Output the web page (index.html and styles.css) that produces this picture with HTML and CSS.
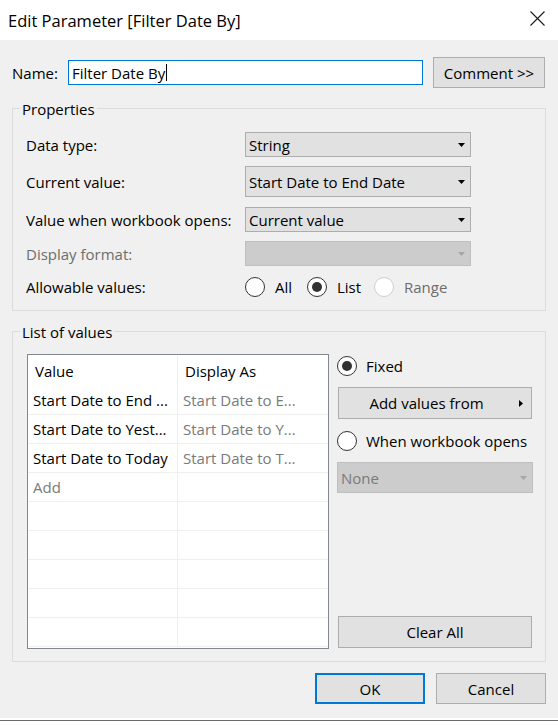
FILE: index.html
```html
<!DOCTYPE html>
<html>
<head>
<meta charset="utf-8">
<link rel="stylesheet" href="styles.css">
</head>
<body>
<div class="window">
  <header class="titlebar">
    <span class="title">Edit Parameter [Filter Date By]</span>
    <svg class="close" viewBox="0 0 15 15" width="15" height="15"><path d="M0.5 0.5 L14.5 14.5 M14.5 0.5 L0.5 14.5" stroke="#1a1a1a" stroke-width="1.1" fill="none"/></svg>
  </header>
  <main class="content">
    <div class="name-row">
      <span class="name-label">Name:</span>
      <div class="name-input"><span>Filter Date By</span><span class="caret"></span></div>
      <button class="btn comment">Comment &gt;&gt;</button>
    </div>

    <section class="group props">
      <div class="group-title">Properties</div>
      <div class="prop-rows">
        <div class="prop-row h25">
          <span class="lbl">Data type:</span>
          <div class="select"><span>String</span><svg class="arrow" viewBox="0 0 7 4" width="7" height="4"><polygon points="0,0 7,0 3.5,4" fill="#000"/></svg></div>
        </div>
        <div class="prop-row h31 gap9">
          <span class="lbl">Current value:</span>
          <div class="select"><span>Start Date to End Date</span><svg class="arrow" viewBox="0 0 7 4" width="7" height="4"><polygon points="0,0 7,0 3.5,4" fill="#000"/></svg></div>
        </div>
        <div class="prop-row h25 gap10">
          <span class="lbl">Value when workbook opens:</span>
          <div class="select"><span>Current value</span><svg class="arrow" viewBox="0 0 7 4" width="7" height="4"><polygon points="0,0 7,0 3.5,4" fill="#000"/></svg></div>
        </div>
        <div class="prop-row h25 gap9">
          <span class="lbl disabled">Display format:</span>
          <div class="select off"><span></span><svg class="arrow" viewBox="0 0 7 4" width="7" height="4"><polygon points="0,0 7,0 3.5,4" fill="#a6a6a6"/></svg></div>
        </div>
        <div class="prop-row h20 gap11">
          <span class="lbl">Allowable values:</span>
          <div class="radios">
            <label class="radio-item w62"><span class="radio"></span><span>All</span></label>
            <label class="radio-item w67"><span class="radio on"></span><span>List</span></label>
            <label class="radio-item"><span class="radio dis"></span><span class="disabled">Range</span></label>
          </div>
        </div>
      </div>
    </section>

    <section class="group values">
      <div class="group-title">List of values</div>
      <div class="list-body">
        <div class="table">
          <div class="trow head"><div class="cell">Value</div><div class="cell">Display As</div></div>
          <div class="trow"><div class="cell">Start Date to End ...</div><div class="cell muted">Start Date to E...</div></div>
          <div class="trow"><div class="cell">Start Date to Yest...</div><div class="cell muted">Start Date to Y...</div></div>
          <div class="trow"><div class="cell">Start Date to Today</div><div class="cell muted">Start Date to T...</div></div>
          <div class="trow"><div class="cell muted">Add</div><div class="cell"></div></div>
          <div class="trow"><div class="cell"></div><div class="cell"></div></div>
          <div class="trow"><div class="cell"></div><div class="cell"></div></div>
          <div class="trow"><div class="cell"></div><div class="cell"></div></div>
          <div class="trow"><div class="cell"></div><div class="cell"></div></div>
          <div class="trow"><div class="cell"></div><div class="cell"></div></div>
        </div>
        <div class="side">
          <label class="radio-line first"><span class="radio on"></span><span>Fixed</span></label>
          <button class="btn add-btn"><span class="add-text">Add values from</span><svg class="rarrow" viewBox="0 0 4 7" width="4" height="7"><polygon points="0,0 4,3.5 0,7" fill="#000"/></svg></button>
          <label class="radio-line second"><span class="radio"></span><span>When workbook opens</span></label>
          <div class="select off none"><span>None</span><svg class="arrow" viewBox="0 0 7 4" width="7" height="4"><polygon points="0,0 7,0 3.5,4" fill="#a6a6a6"/></svg></div>
          <button class="btn clear-btn">Clear All</button>
        </div>
      </div>
    </section>

    <div class="footer">
      <button class="btn ok">OK</button>
      <button class="btn cancel">Cancel</button>
    </div>
  </main>
  <div class="under"><div class="under-line"></div></div>
</div>
</body>
</html>
```

FILE: styles.css
```css
* { box-sizing: border-box; }
html, body { margin: 0; padding: 0; }
body {
  width: 558px;
  height: 725px;
  overflow: hidden;
  font-family: "Open Sans", "Noto Sans", sans-serif;
  font-size: 15px;
  color: #000;
  background: #fff;
}
.window { display: flex; flex-direction: column; height: 725px; }

.titlebar {
  height: 40px;
  flex: none;
  background: #fff;
  display: flex;
  align-items: center;
  padding-left: 8px;
}
.title { flex: 1; font-size: 16.5px; color: #000; }
.close { align-self: flex-start; margin-top: 11px; margin-right: 13px; }

.content {
  height: 678px;
  flex: none;
  background: #f0f0f0;
  padding: 17px 12px 0 12px;
  display: flex;
  flex-direction: column;
}

.name-row { display: flex; align-items: center; height: 31px; }
.name-label { width: 56px; }
.name-input {
  width: 355px;
  height: 25px;
  border: 1px solid #0078d7;
  background: #fff;
  padding-left: 3px;
  display: flex;
  align-items: center;
}
.caret { width: 1px; height: 17px; background: #000; margin-left: 1px; }

.btn {
  font: inherit;
  color: #000;
  background: #e1e1e1;
  border: 1px solid #adadad;
  padding: 0;
  display: flex;
  align-items: center;
  justify-content: center;
}
.comment { margin-left: 10px; width: 112px; height: 31px; }

.group { border: 1px solid #dcdcdc; width: 534px; }
.group-title {
  width: max-content;
  height: 20px;
  line-height: 20px;
  margin: -10px 0 0 7px;
  padding: 0 2px;
  background: #f0f0f0;
}
.props { margin-top: 20px; }
.prop-rows { padding: 13px 0 13px 13px; display: flex; flex-direction: column; }
.prop-row { display: flex; align-items: center; }
.h25 { height: 25px; }
.h31 { height: 31px; }
.h20 { height: 20px; }
.gap9 { margin-top: 9px; }
.gap10 { margin-top: 10px; }
.gap11 { margin-top: 11px; }
.lbl { width: 219px; white-space: nowrap; }
.disabled { color: #6d6d6d; }

.select {
  width: 226px;
  height: 100%;
  background: #e1e1e1;
  border: 1px solid #adadad;
  display: flex;
  align-items: center;
  justify-content: space-between;
  padding: 0 5px 0 3px;
}
.select.off { background: #cccccc; border-color: #bfbfbf; color: #7a7a7a; }

.radios { display: flex; align-items: center; }
.radio-item { display: flex; align-items: center; gap: 10px; }
.w62 { width: 62px; }
.w67 { width: 67px; }
.radio {
  width: 20px;
  height: 20px;
  flex: none;
  border: 1px solid #333;
  border-radius: 50%;
  background: #fff;
  display: flex;
  align-items: center;
  justify-content: center;
}
.radio.on::after {
  content: "";
  width: 10px;
  height: 10px;
  border-radius: 50%;
  background: #333;
}
.radio.dis { border-color: #cfcfcf; }

.values { margin-top: 20px; }
.list-body { display: flex; gap: 8px; padding: 12px 0 12px 14px; }

.table {
  width: 302px;
  height: 295px;
  border: 1px solid #828790;
  background: #fff;
  display: flex;
  flex-direction: column;
  overflow: hidden;
}
.trow { display: flex; height: 29px; border-bottom: 1px solid #efefef; flex: none; }
.trow.head { height: 31px; border-bottom: none; padding-top: 1px; }
.cell {
  width: 150px;
  padding-left: 5px;
  display: flex;
  align-items: center;
  white-space: nowrap;
  overflow: hidden;
}
.trow.head .cell { padding-left: 7px; }
.cell:first-child { border-right: 1px solid #efefef; }
.muted { color: #7a7a7a; }

.side { width: 196px; height: 295px; display: flex; flex-direction: column; }
.radio-line { display: flex; align-items: center; gap: 9px; height: 20px; white-space: nowrap; }
.radio-line.first { margin-top: 2px; }
.radio-line.second { margin-top: 12px; }
.add-btn {
  margin: 11px 0 0 1px;
  width: 194px;
  height: 32px;
  justify-content: flex-start;
}
.add-text { width: 175px; text-align: center; }
.rarrow { margin-left: 5px; }
.none { margin-top: 11px; width: 196px; height: 31px; }
.clear-btn { margin: auto 0 1px 1px; width: 194px; height: 32px; }

.footer { display: flex; justify-content: flex-end; gap: 11px; margin-top: 11px; }
.ok { width: 110px; height: 31px; border: 2px solid #0078d7; }
.cancel { width: 110px; height: 31px; }

.under { height: 7px; flex: none; background: #fff; overflow: hidden; }
.under-line { height: 1px; margin-top: 2px; background: #6a6a6a; }
```
